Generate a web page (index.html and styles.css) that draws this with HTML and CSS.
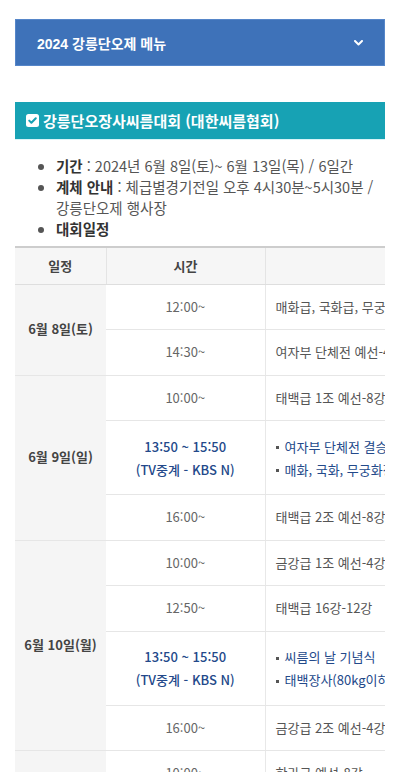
FILE: index.html
```html
<!DOCTYPE html>
<html lang="ko">
<head>
<meta charset="utf-8">
<title>2024 강릉단오제 - 강릉단오장사씨름대회</title>
<link rel="stylesheet" href="styles.css">
</head>
<body>
<div class="page">
  <div class="menu">
    <span class="menu-title">2024 강릉단오제 메뉴</span>
    <svg class="chevron" width="9" height="6" viewBox="0 0 9 6"><path d="M1 1l3.5 3.5L8 1" fill="none" stroke="#fff" stroke-width="2" stroke-linecap="round" stroke-linejoin="round"/></svg>
  </div>

  <h2 class="section-title">
    <svg class="check" width="13" height="13" viewBox="0 0 13 13"><rect x="0" y="0" width="13" height="13" rx="2.5" fill="#fff"/><path d="M3.2 6.6l2.2 2.2 4.4-4.6" fill="none" stroke="#17a2b4" stroke-width="2" stroke-linecap="round" stroke-linejoin="round"/></svg>
    <span>강릉단오장사씨름대회 (대한씨름협회)</span>
  </h2>

  <ul class="info">
    <li><b>기간</b> : 2024년 6월 8일(토)~ 6월 13일(목) / 6일간</li>
    <li><b>계체 안내</b> : 체급별경기전일 오후 4시30분~5시30분 / 강릉단오제 행사장</li>
    <li><b>대회일정</b></li>
  </ul>

  <div class="table-wrap">
    <table class="schedule">
      <colgroup>
        <col class="c-date">
        <col class="c-time">
        <col class="c-desc">
      </colgroup>
      <thead>
        <tr><th>일정</th><th>시간</th><th class="th-desc">경기내용</th></tr>
      </thead>
      <tbody>
        <tr><td class="date" rowspan="2">6월 8일(토)</td><td class="time">12:00~</td><td class="desc">매화급, 국화급, 무궁화급 예선-결승</td></tr>
        <tr><td class="time">14:30~</td><td class="desc">여자부 단체전 예선-4강</td></tr>

        <tr><td class="date" rowspan="3">6월 9일(일)</td><td class="time">10:00~</td><td class="desc">태백급 1조 예선-8강</td></tr>
        <tr><td class="time tv">13:50 ~ 15:50<br>(TV중계 - KBS N)</td><td class="desc tv-desc"><ul class="events"><li>여자부 단체전 결승</li><li>매화, 국화, 무궁화장사 결정전</li></ul></td></tr>
        <tr><td class="time">16:00~</td><td class="desc">태백급 2조 예선-8강</td></tr>

        <tr><td class="date" rowspan="4">6월 10일(월)</td><td class="time">10:00~</td><td class="desc">금강급 1조 예선-4강</td></tr>
        <tr><td class="time">12:50~</td><td class="desc">태백급 16강-12강</td></tr>
        <tr><td class="time tv">13:50 ~ 15:50<br>(TV중계 - KBS N)</td><td class="desc tv-desc"><ul class="events"><li>씨름의 날 기념식</li><li>태백장사(80kg이하) 결정전</li></ul></td></tr>
        <tr><td class="time">16:00~</td><td class="desc">금강급 2조 예선-4강</td></tr>

        <tr><td class="date" rowspan="2">6월 11일(화)</td><td class="time">10:00~</td><td class="desc">한라급 예선-8강</td></tr>
        <tr><td class="time">14:00~</td><td class="desc">한라급 8강-결승</td></tr>
      </tbody>
    </table>
  </div>
</div>
</body>
</html>
```

FILE: styles.css
```css
* { box-sizing: border-box; }

body {
  margin: 0;
  background: #fff;
  color: #444;
  font-family: "Noto Sans CJK KR", "Noto Sans", sans-serif;
}

.page {
  padding: 19px 15px 0;
}

.menu {
  display: flex;
  align-items: center;
  justify-content: space-between;
  height: 47px;
  padding: 0 21px 0 21px;
  background: #3e72b9;
  border: 1px solid #5686c9;
  color: #fff;
}

.menu-title {
  font-family: "Liberation Sans", "Noto Sans CJK KR", sans-serif;
  font-size: 14px;
  font-weight: 700;
}

.chevron { display: block; }

.section-title {
  display: flex;
  align-items: center;
  gap: 4px;
  margin: 36px 0 0;
  height: 37px;
  padding-left: 11px;
  background: #17a2b4;
  box-shadow: 0 1px 0 #d9f4f7;
  color: #fff;
  font-size: 15px;
  font-weight: 700;
}

.check { display: block; flex: none; }

.info {
  margin: 16px 0 7px;
  padding-left: 41px;
  font-size: 14.5px;
  line-height: 21px;
  color: #555;
  word-break: keep-all;
}

.info b {
  color: #333;
  font-weight: 700;
}

.table-wrap {
  overflow: hidden;
}

.schedule {
  width: 560px;
  table-layout: fixed;
  border-collapse: collapse;
  border-top: 2px solid #cdcdcd;
  font-size: 13px;
}

.c-date { width: 91px; }
.c-time { width: 159px; }
.c-desc { width: 310px; }

.schedule th {
  height: 37px;
  padding: 0;
  background: #f6f6f6;
  border-bottom: 1px solid #dedede;
  border-right: 1px solid #e4e4e4;
  color: #444;
  font-weight: 700;
  text-align: center;
}

.schedule .th-desc {
  color: transparent;
}

.schedule td {
  padding: 11px 10px;
  line-height: 22.5px;
  border-bottom: 1px solid #e6e6e6;
  vertical-align: middle;
}

.schedule .date {
  padding: 0;
  background: #f5f5f5;
  color: #444;
  font-weight: 700;
  text-align: center;
  white-space: nowrap;
}

.time {
  text-align: center;
  color: #666;
  border-right: 1px solid #e8e8e8;
}

.schedule .time.tv {
  color: #23498a;
  font-weight: 500;
  line-height: 23px;
}

.desc {
  padding-left: 12px;
  white-space: nowrap;
  color: #555;
}

.events {
  list-style: none;
  margin: 2.5px 0;
  padding: 0;
}

.events li {
  color: #23498a;
  line-height: 23px;
}

.events li::before {
  content: "";
  display: inline-block;
  width: 3px;
  height: 3px;
  margin-right: 6px;
  background: #555;
  vertical-align: middle;
}
```
